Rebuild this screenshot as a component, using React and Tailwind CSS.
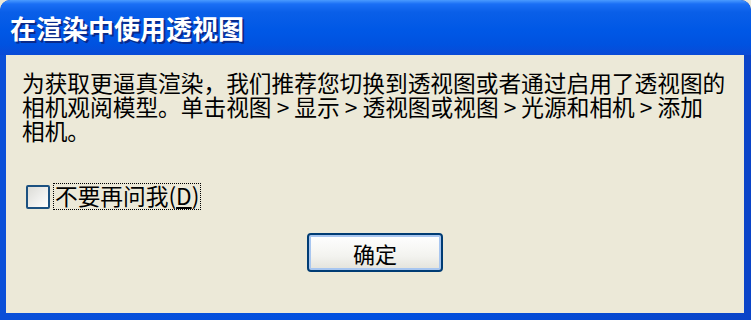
import React from 'react';

function App() {
  const font = { fontFamily: '"Noto Sans CJK SC", "Noto Sans", sans-serif' };

  return (
    <div className="w-[751px] h-[320px] bg-[#ece9d8]" style={font}>
      {/* Window frame */}
      <div className="w-full h-full flex flex-col rounded-t-[10px] bg-[linear-gradient(to_right,#0a4fd8,#0050e0_50%,#0a44c8)] overflow-hidden">
        {/* Title bar */}
        <div className="h-[55px] shrink-0 flex items-center pl-[10px] rounded-t-[10px] bg-[linear-gradient(to_bottom,#4a9bff_0px,#1a6ff5_4px,#0a5fe8_12px,#0058e6_30px,#0052e0_45px,#0a4ad6_55px)]">
          <span className="text-white font-bold text-[26px] leading-none [text-shadow:2px_2px_0_#0a2a8a]">
            在渲染中使用透视图
          </span>
        </div>

        {/* Body */}
        <div className="flex-1 mx-[6px] mr-[7px] mb-[7px] bg-[#ece9d8] flex flex-col pt-[16px] pl-[16px] text-black">
          <div className="text-[22.7px] leading-[24px]">
            <div className="whitespace-nowrap">为获取更逼真渲染，我们推荐您切换到透视图或者通过启用了透视图的</div>
            <div className="whitespace-nowrap">相机观阅模型。单击视图 &gt; 显示 &gt; 透视图或视图 &gt; 光源和相机 &gt; 添加</div>
            <div className="whitespace-nowrap">相机。</div>
          </div>

          <div className="mt-[40px] flex items-center gap-[3px] pl-[4px]">
            <div className="w-[24px] h-[24px] border-2 border-[#1c5180] rounded-[2px] bg-[linear-gradient(135deg,#dcdcd7,#ffffff)]" />
            <div className="px-[1px] h-[27px] flex items-center border border-dotted border-black text-[22.7px] leading-none">
              不要再问我(<span className="underline underline-offset-2">D</span>)
            </div>
          </div>

          <div className="mt-[23px] flex justify-center pr-[16px]">
            <button className="w-[136px] h-[39px] rounded-[4px] border-2 border-[#003c74] bg-[linear-gradient(to_bottom,#ffffff,#f3f3ef_60%,#e3e2da)] shadow-[inset_0_0_0_2px_#a8c6f0] text-[22px] leading-none text-black flex items-center justify-center">
              确定
            </button>
          </div>
        </div>
      </div>
    </div>
  );
}

export default App;
